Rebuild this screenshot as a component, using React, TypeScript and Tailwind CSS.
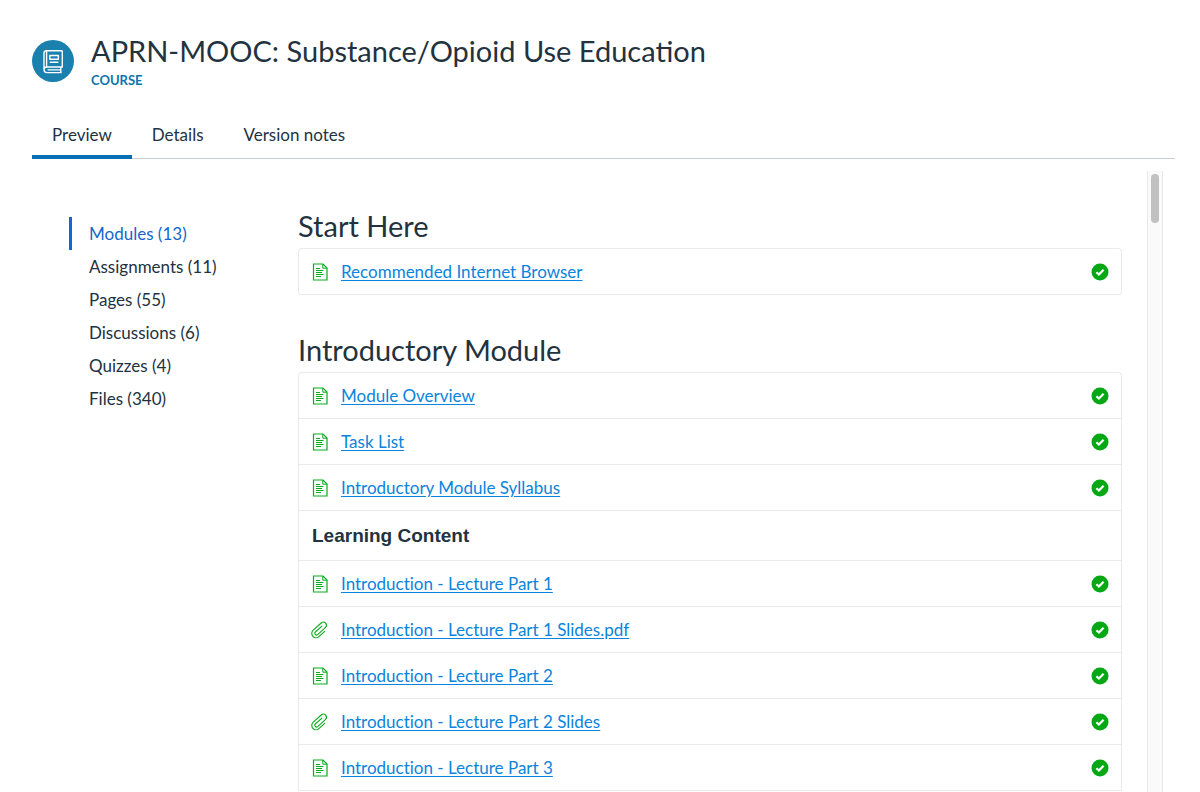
import clsx from 'clsx'
import { useState } from 'react'

type ItemKind = 'page' | 'attachment' | 'header'

type ModuleItem = {
  kind: ItemKind
  title: string
}

type CourseModule = {
  title: string
  items: ModuleItem[]
}

const tabs = ['Preview', 'Details', 'Version notes']

const sections = [
  { label: 'Modules', count: 13 },
  { label: 'Assignments', count: 11 },
  { label: 'Pages', count: 55 },
  { label: 'Discussions', count: 6 },
  { label: 'Quizzes', count: 4 },
  { label: 'Files', count: 340 },
]

const modules: CourseModule[] = [
  {
    title: 'Start Here',
    items: [{ kind: 'page', title: 'Recommended Internet Browser' }],
  },
  {
    title: 'Introductory Module',
    items: [
      { kind: 'page', title: 'Module Overview' },
      { kind: 'page', title: 'Task List' },
      { kind: 'page', title: 'Introductory Module Syllabus' },
      { kind: 'header', title: 'Learning Content' },
      { kind: 'page', title: 'Introduction - Lecture Part 1' },
      { kind: 'attachment', title: 'Introduction - Lecture Part 1 Slides.pdf' },
      { kind: 'page', title: 'Introduction - Lecture Part 2' },
      { kind: 'attachment', title: 'Introduction - Lecture Part 2 Slides' },
      { kind: 'page', title: 'Introduction - Lecture Part 3' },
    ],
  },
]

function CourseIcon() {
  return (
    <svg viewBox="0 0 42 42" className="size-[42px] shrink-0" fill="none" aria-hidden="true">
      <circle cx="21" cy="21" r="21" fill="#1a80ae" />
      <g stroke="#fff" strokeWidth="1.4" strokeLinejoin="round">
        <path d="M30.3 10.7H14.4c-1.500 0-2.400 1-2.400 2.400v16.500c0 1.700 1.100 3 2.800 3h14.800M30.300 10.700v16.300H14.800c-1.600 0-2.800 1-2.800 2.600M14.600 11v16" />
        <path d="M17.800 15.500h8.600v3.800h-8.600zM17.800 22.300h8.600M15.600 29.900h13.200M28.800 27v5.500" />
      </g>
    </svg>
  )
}

function PageIcon() {
  return (
    <svg viewBox="0 0 18 18" className="size-[18px] shrink-0" fill="none" stroke="#0aab1c" aria-hidden="true">
      <path d="M2.500 1h9.500l4 4v12h-13.500z" strokeWidth="1.200" />
      <path d="M11.800 1v4.200h4.200" strokeWidth="1" />
      <path d="M5 5.500h4M5 7.500h7.500M5 9.500h6M5 11.500h7.500M5 13.500h5" strokeWidth="1" />
    </svg>
  )
}

function AttachmentIcon() {
  return (
    <svg
      viewBox="0 0 18 18"
      className="size-[18px] shrink-0 overflow-visible"
      fill="none"
      stroke="#0aab1c"
      strokeWidth="1.100"
      strokeLinecap="round"
      aria-hidden="true"
    >
      <path
        d="M13 7.400H4.200a1.700 1.700 0 0 0 0 3.400H14.600a3.100 3.100 0 0 0 0-6.200H3.800a4.300 4.300 0 0 0 0 8.600H11.500"
        transform="rotate(-42 9 9)"
      />
    </svg>
  )
}

function PublishedIcon() {
  return (
    <svg viewBox="0 0 18 18" className="size-[18px] shrink-0" role="img" aria-label="Published">
      <circle cx="9" cy="9" r="8.500" fill="#03a814" />
      <path d="M5.400 9.200l2.500 2.300 4.700-4.700" fill="none" stroke="#fff" strokeWidth="2.200" />
    </svg>
  )
}

function ModuleRow({ item }: { item: ModuleItem }) {
  if (item.kind === 'header') {
    return (
      <li className="flex h-[50px] items-center border-b border-[#e8eaec] px-[13px]">
        <h3 className="font-['Liberation_Sans',sans-serif] text-[19px] leading-6 font-bold">{item.title}</h3>
      </li>
    )
  }

  return (
    <li className="flex h-[46px] items-center gap-3 border-b border-[#e8eaec] px-3">
      {item.kind === 'page' ? <PageIcon /> : <AttachmentIcon />}
      <a href="#" className="text-[17px] leading-6 text-[#0a84dc] underline underline-offset-2">
        {item.title}
      </a>
      <span className="ml-auto flex">
        <PublishedIcon />
      </span>
    </li>
  )
}

export default function App() {
  const [activeTab, setActiveTab] = useState('Preview')
  const [activeSection, setActiveSection] = useState('Modules')

  return (
    <div className="flex h-screen flex-col overflow-hidden bg-white pr-[25px] pl-8 font-['Lato',sans-serif] text-[#22323f]">
      <header className="flex items-start gap-[17px] pt-8">
        <div className="pt-2">
          <CourseIcon />
        </div>
        <div>
          <h1 className="mb-0.5 text-[29px] leading-[38px]">APRN-MOOC: Substance/Opioid Use Education</h1>
          <p className="text-[13px] leading-4 font-bold text-[#0e75ab] uppercase">Course</p>
        </div>
      </header>

      <div className="mt-6 flex shrink-0 border-b border-[#c7cdd1]" role="tablist">
        {tabs.map((tab) => (
          <button
            key={tab}
            type="button"
            role="tab"
            aria-selected={tab === activeTab}
            className={clsx(
              '-mb-px h-[47px] border-b-4 px-5 pt-0.5 text-[17px] leading-6',
              tab === activeTab ? 'border-[#0770b3]' : 'border-transparent',
            )}
            onClick={() => setActiveTab(tab)}
          >
            {tab}
          </button>
        ))}
      </div>

      <div className="mt-3 flex min-h-0 flex-1 pr-3">
        <nav className="w-[229px] shrink-0 pt-[46px] pl-[37px]" aria-label="Course content">
          {sections.map(({ label, count }) => (
            <a
              key={label}
              href="#"
              className={clsx(
                'flex h-[33px] items-center border-l-3 pl-[17px] text-[17px] leading-6',
                label === activeSection ? 'border-[#1467cc] text-[#1467cc]' : 'border-transparent',
              )}
              onClick={() => setActiveSection(label)}
            >
              {label} ({count})
            </a>
          ))}
        </nav>

        <main className="min-w-0 flex-1 overflow-hidden pt-9 pr-[25px] pl-[37px] [font-variant-ligatures:none]">
          {modules.map((module) => (
            <section key={module.title} className="group mb-9">
              <h2 className="mb-[3px] text-[29px] leading-[38px]">{module.title}</h2>
              <ul className="rounded border border-b-0 border-[#e8eaec] group-last:rounded-b-none">
                {module.items.map((item) => (
                  <ModuleRow key={item.title} item={item} />
                ))}
              </ul>
            </section>
          ))}
        </main>

        <div className="w-4 shrink-0 border-x border-[#e8e8e8] bg-[#fafafa] px-[3px] pt-[3px]" aria-hidden="true">
          <div className="h-[49px] rounded-full bg-[#c1c1c1]" />
        </div>
      </div>
    </div>
  )
}
